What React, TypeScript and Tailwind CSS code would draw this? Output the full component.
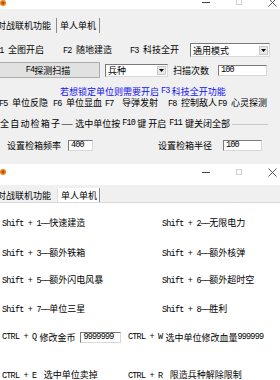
import React from "react";

const L = ({ children, className = "" }: { children: React.ReactNode; className?: string }) => (
  <span className={`font-['Liberation_Mono',monospace] text-[8.5px] tracking-[-0.8px] ${className}`}>{children}</span>
);

const Controls = () => (
  <div className="flex shrink-0 h-[16px]">
    <div className="w-[32px] flex justify-center items-center">
      <div className="w-[8px] h-px bg-[#444]" />
    </div>
    <div className="w-[34px] flex justify-center items-center">
      <div className="w-[6px] h-[6px] border border-[#cfcfcf]" />
    </div>
    <div className="w-[32px] flex justify-center items-center">
      <svg width="9" height="9" viewBox="0 0 9 9">
        <path d="M0.5 0.5L8.5 8.5M8.5 0.5L0.5 8.5" stroke="#444" strokeWidth="0.9" fill="none" />
      </svg>
    </div>
  </div>
);

const Icon = () => (
  <svg width="6" height="6" viewBox="0 0 6 6" className="shrink-0">
    <circle cx="3" cy="3" r="3" fill="#e8831e" />
    <circle cx="3" cy="3" r="1.4" fill="#c4420c" />
  </svg>
);

const Input = ({ value, w }: { value: string; w: string }) => (
  <div className={`${w} h-[11px] shrink-0 bg-white border border-[#7a7a7a] border-r-[#d8d8d8] border-b-[#d8d8d8] flex items-center pl-[2px]`}>
    <L>{value}</L>
  </div>
);

const Arrow = () => (
  <div className="w-[9px] h-[9px] bg-[#e8e8e8] border border-[#c8c8c8] flex items-center justify-center mr-[1px]">
    <svg width="5" height="3" viewBox="0 0 5 3">
      <path d="M0 0H5L2.5 3Z" fill="#000" />
    </svg>
  </div>
);

export default function App() {
  return (
    <div className="w-[280px] h-[380px] overflow-hidden bg-white font-['Noto_Sans_CJK_SC',sans-serif] text-[9px] leading-none text-black whitespace-nowrap">
      {/* Window 1 */}
      <div className="h-[164px] flex flex-col bg-[#f0f0f0] overflow-hidden">
        <div className="h-[9px] bg-white flex items-start shrink-0 overflow-visible">
          <Icon />
          <div className="w-[184px] shrink-0" />
          <div className="mt-[-6px]">
            <Controls />
          </div>
        </div>
        {/* tabs */}
        <div className="mt-[9px] h-[15px] flex shrink-0">
          <div className="ml-[-3px] w-[60px] h-full flex items-center border-r border-[#8a8a8a] shrink-0">
            <span>对战联机功能</span>
          </div>
          <div className="w-[43px] h-full flex items-center pl-[3px] border-r border-[#8a8a8a] shrink-0">
            <span>单人单机</span>
          </div>
        </div>
        {/* row1 */}
        <div className="mt-[10px] h-[14px] flex items-center shrink-0 ml-[-5px]">
          <div className="w-[68px] shrink-0"><L>F1 </L>全图开启</div>
          <div className="w-[67px] shrink-0"><L>F2 </L>随地建造</div>
          <div className="w-[60px] shrink-0"><L>F3 </L>科技全开</div>
          <div className="w-[80px] h-[14px] shrink-0 bg-white border border-[#7a7a7a] border-r-[#d8d8d8] border-b-[#d8d8d8] flex items-center justify-between pl-[2px]">
            <span>通用模式</span>
            <Arrow />
          </div>
        </div>
        {/* row2 */}
        <div className="mt-[5px] h-[16px] flex items-center shrink-0 ml-[-4px]">
          <div className="w-[104px] h-[16px] shrink-0 bg-[#e1e1e1] border border-[#adadad] flex items-center justify-center">
            <L>F4</L>探测扫描
          </div>
          <div className="ml-[5px] w-[63px] h-[13px] shrink-0 bg-white border border-[#7a7a7a] border-r-[#d8d8d8] border-b-[#d8d8d8] flex items-center justify-between pl-[2px]">
            <span>兵种</span>
            <Arrow />
          </div>
          <div className="ml-[5px] w-[45px] shrink-0">扫描次数</div>
          <Input value="100" w="w-[49px]" />
        </div>
        {/* row3 blue */}
        <div className="mt-[8px] h-[10px] flex items-center shrink-0 pl-[60px] text-[#1010f0]">
          若想锁定单位则需要开启<L className="mx-[2px]">F3</L>科技全开功能
        </div>
        {/* row4 */}
        <div className="mt-[2px] h-[10px] flex items-center shrink-0 ml-[-1px]">
          <div className="w-[54px] shrink-0"><L>F5 </L>单位反隐</div>
          <div className="w-[52px] shrink-0"><L>F6 </L>单位显血</div>
          <div className="w-[63px] shrink-0"><L>F7 </L><span className="ml-[4px]">导弹发射</span></div>
          <div className="w-[50px] shrink-0"><L>F8 </L>控制敌人</div>
          <div className="shrink-0"><L>F9 </L>心灵探测</div>
        </div>
        {/* row5 */}
        <div className="mt-[10px] h-[10px] flex items-center shrink-0">
          <span className="tracking-[1.2px]">全自动检箱子</span>
          <span className="w-[14px] text-[7px] shrink-0">——</span>
          <span>选中单位按</span>
          <L className="mx-[2px]">F10</L>
          <span>键 开启</span>
          <L className="mx-[3px]">F11</L>
          <span>键关闭全部</span>
          <div className="ml-[2px] w-[36px] h-px bg-[#c8c8c8] mt-[3px] shrink-0" />
        </div>
        {/* row6 */}
        <div className="mt-[11px] h-[12px] flex items-center shrink-0">
          <div className="ml-[7px] w-[61px] shrink-0">设置检箱频率</div>
          <Input value="400" w="w-[25px]" />
          <div className="ml-[65px] w-[65px] shrink-0">设置检箱半径</div>
          <Input value="100" w="w-[39px]" />
        </div>
      </div>

      {/* Window 2 */}
      <div className="h-[216px] flex flex-col bg-white">
        <div className="h-[21px] bg-white flex items-start shrink-0">
          <div className="mt-[5px]">
            <Icon />
          </div>
          <div className="w-[184px] shrink-0" />
          <Controls />
        </div>
        <div className="h-[18px] bg-[#f0f0f0] flex items-end shrink-0 border-b border-[#d9d9d9]">
          <div className="ml-[-3px] w-[60px] h-[13px] flex items-center shrink-0">
            <span>对战联机功能</span>
          </div>
          <div className="w-[43px] h-[14px] flex items-center pl-[3px] bg-white border-r border-[#8a8a8a] border-l border-l-[#e0e0e0] shrink-0">
            <span>单人单机</span>
          </div>
        </div>
        {/* content */}
        <div className="flex flex-col">
          <div className="mt-[15px] h-[10px] flex items-center">
            <div className="w-[162px] pl-[2px] shrink-0"><L>Shift + 1——</L>快速建造</div>
            <div><L>Shift + 2——</L>无限电力</div>
          </div>
          <div className="mt-[20px] h-[10px] flex items-center">
            <div className="w-[162px] pl-[2px] shrink-0"><L>Shift + 3——</L>额外铁箱</div>
            <div><L>Shift + 4——</L>额外核弹</div>
          </div>
          <div className="mt-[17px] h-[10px] flex items-center">
            <div className="w-[162px] pl-[2px] shrink-0"><L>Shift + 5——</L>额外闪电风暴</div>
            <div><L>Shift + 6——</L>额外超时空</div>
          </div>
          <div className="mt-[19px] h-[10px] flex items-center">
            <div className="w-[162px] pl-[2px] shrink-0"><L>Shift + 7——</L>单位三星</div>
            <div><L>Shift + 8——</L>胜利</div>
          </div>
          <div className="mt-[18px] h-[11px] flex items-center">
            <div className="w-[128px] pl-[2px] flex items-center shrink-0">
              <L>CTRL + Q </L>
              <span className="ml-[3px]">修改金币</span>
              <div className="ml-[5px]">
                <Input value="9999999" w="w-[41px]" />
              </div>
            </div>
            <div className="flex items-center">
              <L>CTRL + W </L>
              <span className="ml-[3px]">选中单位修改血量</span>
              <L>999999</L>
            </div>
          </div>
          <div className="mt-[27px] h-[10px] flex items-center">
            <div className="w-[128px] pl-[2px] shrink-0"><L>CTRL + E </L><span className="ml-[3px]">选中单位卖掉</span></div>
            <div><L>CTRL + R </L><span className="ml-[3px]">限造兵种解除限制</span></div>
          </div>
        </div>
      </div>
    </div>
  );
}
